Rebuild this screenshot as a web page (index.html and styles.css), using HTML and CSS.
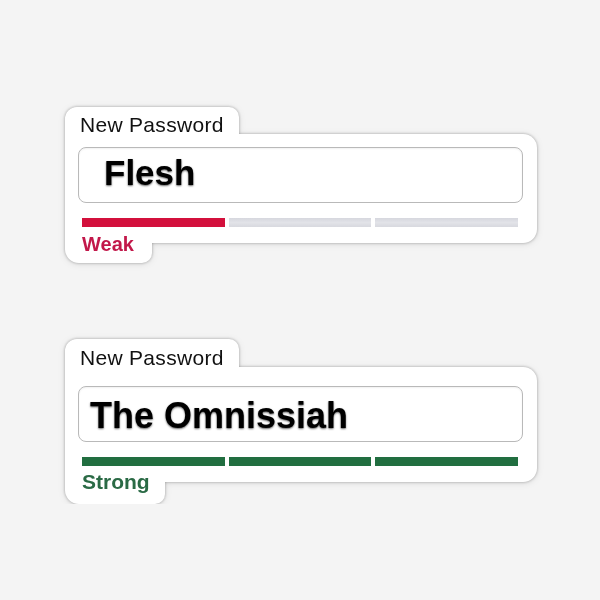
FILE: index.html
```html
<!DOCTYPE html>
<html lang="en">

<head>
    <meta charset="UTF-8">
    <meta name="viewport" content="width=device-width, initial-scale=1.0">
    <title>New Password stickers</title>
    <link rel="stylesheet" href="styles.css">
</head>

<body>

    <div class="halaman">

        <div class="stiker stiker-lemah">
            <div class="tab-atas">New Password</div>
            <div class="badan">
                <div class="kolom">Flesh</div>
                <div class="meter">
                    <span class="ruas isi"></span>
                    <span class="ruas"></span>
                    <span class="ruas"></span>
                </div>
            </div>
            <div class="tab-bawah">Weak</div>
        </div>

        <div class="stiker stiker-kuat">
            <div class="tab-atas">New Password</div>
            <div class="badan">
                <div class="kolom">The Omnissiah</div>
                <div class="meter">
                    <span class="ruas isi"></span>
                    <span class="ruas isi"></span>
                    <span class="ruas isi"></span>
                </div>
            </div>
            <div class="tab-bawah">Strong</div>
        </div>

    </div>

</body>

</html>
```

FILE: styles.css
```css
body {
    margin: 0;
    background-color: #f4f4f4;
    font-family: "Liberation Sans", Arial, Helvetica, sans-serif;
}

.halaman {
    display: flex;
    flex-direction: column;
    align-items: flex-start;
    gap: 76px;
    padding: 107px 0 0 65px;
}

.stiker {
    display: flex;
    flex-direction: column;
    filter: drop-shadow(0 0 1.5px rgba(0, 0, 0, 0.3)) drop-shadow(0 1px 3px rgba(0, 0, 0, 0.1));
}

.tab-atas {
    align-self: flex-start;
    background-color: white;
    color: #111;
    font-size: 21px;
    letter-spacing: 0.3px;
    line-height: 18px;
    padding: 9px 15px 0 15px;
    border-radius: 12px 10px 0 0;
}

.badan {
    width: 472px;
    box-sizing: border-box;
    background-color: white;
    padding: 13px 14px 16px 13px;
    border-radius: 0 14px 14px 0;
}

.kolom {
    height: 56px;
    box-sizing: border-box;
    border: 1px solid #b9b9b9;
    border-radius: 8px;
    box-shadow: inset 0 1px 2px rgba(0, 0, 0, 0.06);
    font-size: 35px;
    font-weight: bold;
    line-height: 40px;
    color: #000;
    text-shadow: 0 1px 2px rgba(0, 0, 0, 0.6);
    padding: 5px 0 0 25px;
}

.meter {
    display: flex;
    gap: 4px;
    margin: 15px 5px 0 4px;
}

.ruas {
    flex: 1;
    height: 9px;
    background: linear-gradient(#d6d7de, #e2e3e8 50%, #d8d9df);
}

.tab-bawah {
    align-self: flex-start;
    background-color: white;
    font-weight: bold;
    font-size: 20px;
    line-height: 20px;
    margin-top: -9px;
    padding: 0 18px 9px 17px;
    border-radius: 0 0 10px 14px;
}

/* lemah */
.stiker-lemah .ruas.isi {
    background: #d3103c;
}

.stiker-lemah .tab-bawah {
    color: #c2184a;
}

/* kuat */
.stiker-kuat .tab-atas {
    padding-top: 10px;
}

.stiker-kuat .badan {
    padding-top: 19px;
}

.stiker-kuat .kolom {
    font-size: 36px;
    padding: 9px 0 0 11px;
}

.stiker-kuat .ruas.isi {
    background: #216e40;
}

.stiker-kuat .tab-bawah {
    color: #2a6a45;
    font-size: 21px;
    margin-top: -10px;
    padding: 0 15px 12px 17px;
}
```
